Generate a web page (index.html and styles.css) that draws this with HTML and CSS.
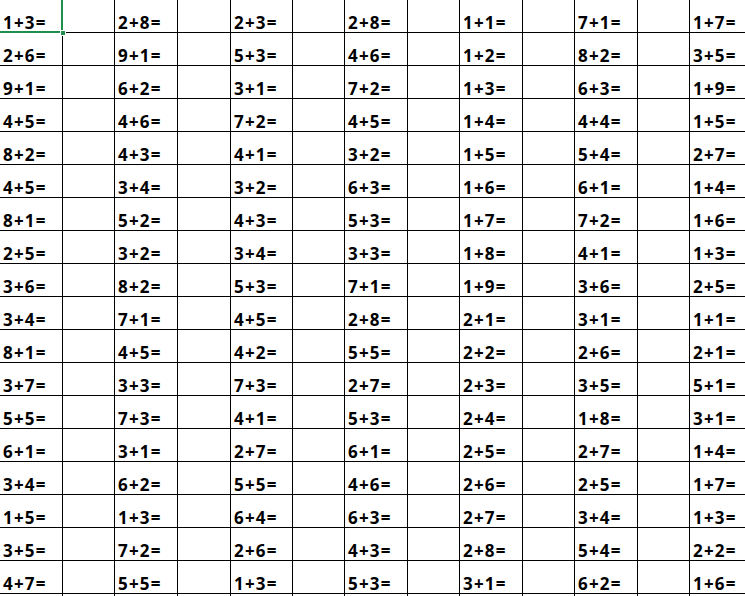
FILE: index.html
```html
<!DOCTYPE html>
<html>
<head>
<meta charset="utf-8">
<link rel="stylesheet" href="styles.css">
</head>
<body>
<div class="sheet">
<div class="grid">
<div class="c">1+3=</div><div class="c"></div><div class="c">2+8=</div><div class="c"></div><div class="c">2+3=</div><div class="c"></div><div class="c">2+8=</div><div class="c"></div><div class="c">1+1=</div><div class="c"></div><div class="c">7+1=</div><div class="c"></div><div class="c">1+7=</div>
<div class="c">2+6=</div><div class="c"></div><div class="c">9+1=</div><div class="c"></div><div class="c">5+3=</div><div class="c"></div><div class="c">4+6=</div><div class="c"></div><div class="c">1+2=</div><div class="c"></div><div class="c">8+2=</div><div class="c"></div><div class="c">3+5=</div>
<div class="c">9+1=</div><div class="c"></div><div class="c">6+2=</div><div class="c"></div><div class="c">3+1=</div><div class="c"></div><div class="c">7+2=</div><div class="c"></div><div class="c">1+3=</div><div class="c"></div><div class="c">6+3=</div><div class="c"></div><div class="c">1+9=</div>
<div class="c">4+5=</div><div class="c"></div><div class="c">4+6=</div><div class="c"></div><div class="c">7+2=</div><div class="c"></div><div class="c">4+5=</div><div class="c"></div><div class="c">1+4=</div><div class="c"></div><div class="c">4+4=</div><div class="c"></div><div class="c">1+5=</div>
<div class="c">8+2=</div><div class="c"></div><div class="c">4+3=</div><div class="c"></div><div class="c">4+1=</div><div class="c"></div><div class="c">3+2=</div><div class="c"></div><div class="c">1+5=</div><div class="c"></div><div class="c">5+4=</div><div class="c"></div><div class="c">2+7=</div>
<div class="c">4+5=</div><div class="c"></div><div class="c">3+4=</div><div class="c"></div><div class="c">3+2=</div><div class="c"></div><div class="c">6+3=</div><div class="c"></div><div class="c">1+6=</div><div class="c"></div><div class="c">6+1=</div><div class="c"></div><div class="c">1+4=</div>
<div class="c">8+1=</div><div class="c"></div><div class="c">5+2=</div><div class="c"></div><div class="c">4+3=</div><div class="c"></div><div class="c">5+3=</div><div class="c"></div><div class="c">1+7=</div><div class="c"></div><div class="c">7+2=</div><div class="c"></div><div class="c">1+6=</div>
<div class="c">2+5=</div><div class="c"></div><div class="c">3+2=</div><div class="c"></div><div class="c">3+4=</div><div class="c"></div><div class="c">3+3=</div><div class="c"></div><div class="c">1+8=</div><div class="c"></div><div class="c">4+1=</div><div class="c"></div><div class="c">1+3=</div>
<div class="c">3+6=</div><div class="c"></div><div class="c">8+2=</div><div class="c"></div><div class="c">5+3=</div><div class="c"></div><div class="c">7+1=</div><div class="c"></div><div class="c">1+9=</div><div class="c"></div><div class="c">3+6=</div><div class="c"></div><div class="c">2+5=</div>
<div class="c">3+4=</div><div class="c"></div><div class="c">7+1=</div><div class="c"></div><div class="c">4+5=</div><div class="c"></div><div class="c">2+8=</div><div class="c"></div><div class="c">2+1=</div><div class="c"></div><div class="c">3+1=</div><div class="c"></div><div class="c">1+1=</div>
<div class="c">8+1=</div><div class="c"></div><div class="c">4+5=</div><div class="c"></div><div class="c">4+2=</div><div class="c"></div><div class="c">5+5=</div><div class="c"></div><div class="c">2+2=</div><div class="c"></div><div class="c">2+6=</div><div class="c"></div><div class="c">2+1=</div>
<div class="c">3+7=</div><div class="c"></div><div class="c">3+3=</div><div class="c"></div><div class="c">7+3=</div><div class="c"></div><div class="c">2+7=</div><div class="c"></div><div class="c">2+3=</div><div class="c"></div><div class="c">3+5=</div><div class="c"></div><div class="c">5+1=</div>
<div class="c">5+5=</div><div class="c"></div><div class="c">7+3=</div><div class="c"></div><div class="c">4+1=</div><div class="c"></div><div class="c">5+3=</div><div class="c"></div><div class="c">2+4=</div><div class="c"></div><div class="c">1+8=</div><div class="c"></div><div class="c">3+1=</div>
<div class="c">6+1=</div><div class="c"></div><div class="c">3+1=</div><div class="c"></div><div class="c">2+7=</div><div class="c"></div><div class="c">6+1=</div><div class="c"></div><div class="c">2+5=</div><div class="c"></div><div class="c">2+7=</div><div class="c"></div><div class="c">1+4=</div>
<div class="c">3+4=</div><div class="c"></div><div class="c">6+2=</div><div class="c"></div><div class="c">5+5=</div><div class="c"></div><div class="c">4+6=</div><div class="c"></div><div class="c">2+6=</div><div class="c"></div><div class="c">2+5=</div><div class="c"></div><div class="c">1+7=</div>
<div class="c">1+5=</div><div class="c"></div><div class="c">1+3=</div><div class="c"></div><div class="c">6+4=</div><div class="c"></div><div class="c">6+3=</div><div class="c"></div><div class="c">2+7=</div><div class="c"></div><div class="c">3+4=</div><div class="c"></div><div class="c">1+3=</div>
<div class="c">3+5=</div><div class="c"></div><div class="c">7+2=</div><div class="c"></div><div class="c">2+6=</div><div class="c"></div><div class="c">4+3=</div><div class="c"></div><div class="c">2+8=</div><div class="c"></div><div class="c">5+4=</div><div class="c"></div><div class="c">2+2=</div>
<div class="c">4+7=</div><div class="c"></div><div class="c">5+5=</div><div class="c"></div><div class="c">1+3=</div><div class="c"></div><div class="c">5+3=</div><div class="c"></div><div class="c">3+1=</div><div class="c"></div><div class="c">6+2=</div><div class="c"></div><div class="c">1+6=</div>
<div class="c"></div><div class="c"></div><div class="c"></div><div class="c"></div><div class="c"></div><div class="c"></div><div class="c"></div><div class="c"></div><div class="c"></div><div class="c"></div><div class="c"></div><div class="c"></div><div class="c"></div>
</div>
<div class="sel"><div class="handle"></div></div>
</div>
</body>
</html>
```
FILE: styles.css
```css
html, body {
  margin: 0;
  padding: 0;
  background: #ffffff;
  overflow: hidden;
}
.sheet {
  position: relative;
  width: 745px;
  height: 596px;
  overflow: hidden;
}
.grid {
  display: grid;
  grid-template-columns: 63px 52px 63px 53px 62px 52px 63px 52px 63px 52px 63px 52px 60px;
  grid-auto-rows: 33px;
  font-family: "Open Sans", "Liberation Sans", sans-serif;
  font-weight: 700;
  font-size: 17px;
  letter-spacing: 1.2px;
  color: #000;
}
.c {
  box-sizing: border-box;
  border-right: 1px solid #000;
  border-bottom: 1px solid #000;
  padding: 13px 0 0 3px;
  line-height: 20px;
  white-space: nowrap;
}
.sel {
  position: absolute;
  left: -3px;
  top: -3px;
  width: 62px;
  height: 32px;
  border: 2px solid #1f8f4e;
}
.handle {
  position: absolute;
  right: -5px;
  bottom: -5px;
  width: 6px;
  height: 6px;
  background: #1f8f4e;
  border: 1px solid #fff;
  box-sizing: border-box;
}
```
